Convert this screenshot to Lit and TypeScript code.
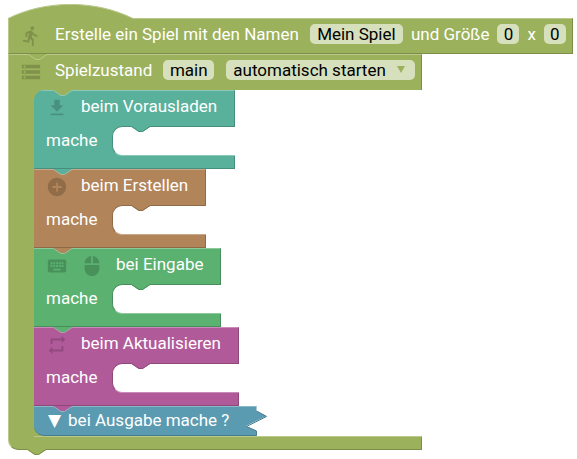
import { LitElement, html, svg, css } from "lit";
import { customElement, property } from "lit/decorators.js";

const ICONS: Record<string, string> = {
  run: "M13.49 5.48c1.1 0 2-.9 2-2s-.9-2-2-2-2 .9-2 2 .9 2 2 2zm-3.6 13.9l1-4.4 2.1 2v6h2v-7.5l-2.1-2 .6-3c1.3 1.5 3.3 2.5 5.5 2.5v-2c-1.9 0-3.5-1-4.3-2.4l-1-1.6c-.4-.6-1-1-1.7-1-.3 0-.5.1-.8.1l-5.2 2.2v4.7h2v-3.4l1.8-.7-1.6 8.1-4.9-1-.4 2 7 1.4z",
  storage: "M2 20h20v-4H2v4zm2-3h2v2H4v-2zM2 4v4h20V4H2zm4 3H4V5h2v2zm-4 7h20v-4H2v4zm2-3h2v2H4v-2z",
  download: "M19 9h-4V3H9v6H5l7 7 7-7zM5 18v2h14v-2H5z",
  add: "M12 2C6.48 2 2 6.48 2 12s4.48 10 10 10 10-4.48 10-10S17.52 2 12 2zm5 11h-4v4h-2v-4H7v-2h4V7h2v4h4v2z",
  keyboard: "M20 5H4c-1.1 0-1.99.9-1.99 2L2 17c0 1.1.9 2 2 2h16c1.1 0 2-.9 2-2V7c0-1.1-.9-2-2-2zm-9 3h2v2h-2V8zm0 3h2v2h-2v-2zM8 8h2v2H8V8zm0 3h2v2H8v-2zm-1 2H5v-2h2v2zm0-3H5V8h2v2zm9 7H8v-2h8v2zm0-4h-2v-2h2v2zm0-3h-2V8h2v2zm3 3h-2v-2h2v2zm0-3h-2V8h2v2z",
  mouse: "M13 1.07V9h7c0-4.08-3.05-7.44-7-7.93zM4 15c0 4.42 3.58 8 8 8s8-3.58 8-8v-4H4v4zm7-13.93C7.05 1.56 4 4.92 4 9h7V1.07z",
  repeat: "M7 7h10v3l4-4-4-4v3H5v6h2V7zm10 10H7v-3l-4 4 4 4v-3h12v-6h-2v4z",
};

const icon = (name: string) =>
  html`<svg class="icon" viewBox="0 0 24 24" aria-hidden="true"><path d=${ICONS[name]} /></svg>`;

/* Connector tab: the block above reaches into the one below. */
const tab = (kind: string) => html`
  <svg class="tab ${kind}" viewBox="0 0 20 7" aria-hidden="true">
    <path class="tab-fill" d="M0 0H20V1H19L11.5 6H7.75L0.5 1H0Z" />
    ${svg`<path class="tab-edge" d="M0 .5H.7L8 5.5H11.5L19 .5H20" />`}
  </svg>
`;

const blockStyles = css`
  * {
    box-sizing: border-box;
  }
  .row {
    position: relative;
    display: flex;
    align-items: center;
    gap: 13px;
    width: max-content;
    height: 36px;
    padding: 0 17px 5px 12px;
    background: var(--fill);
    border-top: 1px solid var(--light);
    border-right: 1px solid var(--dark);
    color: #fff;
    white-space: nowrap;
  }
  .icon {
    flex: none;
    width: 22px;
    height: 22px;
    margin-top: 3px;
    fill: rgb(0 0 0 / 0.18);
  }
  .tab {
    position: absolute;
    width: 20px;
    height: 7px;
    left: 19px;
    top: -1px;
  }
  .tab-fill {
    fill: var(--above);
  }
  .tab-edge {
    fill: none;
    stroke: var(--light);
  }
  .tab.out .tab-fill {
    fill: var(--fill);
  }
  .tab.out .tab-edge {
    stroke: var(--dark);
  }
`;

@customElement("event-block")
class EventBlock extends LitElement {
  @property() label = "";
  @property({ attribute: false }) icons: string[] = [];

  static styles = [
    blockStyles,
    css`
      :host {
        display: block;
        width: max-content;
      }
      .row {
        width: auto;
      }
      .statement {
        display: flex;
        height: 30px;
        background: var(--fill);
      }
      .keyword {
        padding: 0 15px 0 12px;
        line-height: 29px;
        color: #fff;
      }
      .mouth {
        position: relative;
        flex: 1;
        background: #fff;
        border-radius: 10px 0 0 10px;
        border-top: 1px solid var(--dark);
        border-left: 1px solid var(--dark);
        border-bottom: 1px solid var(--light);
      }
      .mouth .tab {
        left: 18px;
      }
      .foot {
        height: 13px;
        background: var(--fill);
        border-right: 1px solid var(--dark);
        border-bottom: 1px solid var(--dark);
      }
    `,
  ];

  render() {
    return html`
      <div class="row">${tab("in")} ${this.icons.map(icon)}<span>${this.label}</span></div>
      <div class="statement">
        <span class="keyword">mache</span>
        <div class="mouth">${tab("out")}</div>
      </div>
      <div class="foot"></div>
    `;
  }
}

@customElement("collapsed-block")
class CollapsedBlock extends LitElement {
  @property() label = "";

  static styles = [
    blockStyles,
    css`
      :host {
        display: flex;
        width: max-content;
      }
      .row {
        gap: 7px;
        height: 30px;
        margin: 0;
        padding: 0 17px 2px 14px;
        font: inherit;
        border-left: 0;
        border-right: 0;
        border-bottom: 1px solid var(--dark);
        border-radius: 0 0 0 10px;
        cursor: pointer;
      }
      .teeth {
        width: 21px;
        height: 30px;
      }
      .teeth-fill {
        fill: var(--fill);
      }
      .teeth-light,
      .teeth-dark {
        fill: none;
        stroke: var(--light);
      }
      .teeth-dark {
        stroke: var(--dark);
      }
    `,
  ];

  render() {
    return html`
      <button class="row" type="button">
        ${tab("in")}<span>▼</span><span>${this.label}</span>
      </button>
      <svg class="teeth" viewBox="0 0 21 30" aria-hidden="true">
        <path class="teeth-fill" d="M0 0H10.5V5L20.5 10L0 20L10.5 25V30H0Z" />
        <path class="teeth-light" d="M0 .5H10.5" />
        <path class="teeth-dark" d="M10.5 5L20.5 10.5L0.5 20.5L10.5 25V29.5H0" />
      </svg>
    `;
  }
}

interface EventDef {
  label: string;
  icons: string[];
  tone: string;
}

const EVENTS: EventDef[] = [
  { label: "beim Vorausladen", icons: ["download"], tone: "teal" },
  { label: "beim Erstellen", icons: ["add"], tone: "brown" },
  { label: "bei Eingabe", icons: ["keyboard", "mouse"], tone: "green" },
  { label: "beim Aktualisieren", icons: ["repeat"], tone: "purple" },
];

@customElement("app-root")
class AppRoot extends LitElement {
  static styles = [
    blockStyles,
    css`
      :host {
        display: block;
        min-height: 100vh;
        padding: 4px 4px 8px 8px;
        overflow-x: auto;
        box-sizing: border-box;
        background: #fff;
        font: 17px/22px Roboto, "DejaVu Sans", sans-serif;
      }
      .olive {
        --fill: #9cb15b;
        --light: #bac88c;
        --dark: #7d8e49;
      }
      .teal {
        --fill: #5ab19b;
        --light: #8bc8b9;
        --dark: #488e7c;
        --above: #9cb15b;
      }
      .brown {
        --fill: #b1845a;
        --light: #c8a98c;
        --dark: #8e6a48;
        --above: #5ab19b;
      }
      .green {
        --fill: #5ab170;
        --light: #8cc89b;
        --dark: #488e5a;
        --above: #b1845a;
      }
      .purple {
        --fill: #b15a99;
        --light: #c88cb8;
        --dark: #8e487a;
        --above: #5ab170;
      }
      .blue {
        --fill: #5a9bb1;
        --light: #8cb9c8;
        --dark: #487c8e;
        --above: #b15a99;
      }
      .hat {
        display: block;
        width: 125px;
        height: 15px;
        position: relative;
        z-index: 1;
        margin-bottom: -1px;
      }
      .hat-fill {
        fill: var(--fill);
      }
      .hat-edge {
        fill: none;
        stroke: var(--light);
      }
      .head {
        padding-right: 6px;
        gap: 8px;
        border-left: 1px solid var(--light);
        padding-left: 11px;
      }
      .head .icon {
        margin-right: 5px;
      }
      .title {
        margin-right: 3px;
      }
      .lower {
        width: max-content;
      }
      .name-row {
        padding-bottom: 4px;
        border-bottom: 1px solid var(--dark);
      }
      .lower .olive-tab .tab {
        --above: var(--fill);
      }
      .field {
        height: 20px;
        margin: 0;
        padding: 0;
        border: 0;
        border-radius: 5px;
        background: #d7e0bd;
        color: #000;
        font: inherit;
        line-height: 20px;
        text-align: center;
      }
      .name {
        width: 93px;
      }
      .state {
        width: 51px;
      }
      .size {
        width: 22px;
      }
      .choice {
        position: relative;
        display: flex;
        margin-left: 4px;
      }
      .mode {
        appearance: none;
        width: 189px;
        padding-left: 7px;
        text-align: left;
      }
      .arrow {
        position: absolute;
        right: 10px;
        top: 6px;
        width: 8px;
        height: 7px;
        fill: var(--fill);
        pointer-events: none;
      }
      .body {
        display: flex;
      }
      .spine {
        width: 26px;
        background: var(--fill);
        border-left: 1px solid var(--light);
      }
      .stack {
        display: flex;
        flex: 1;
        flex-direction: column;
        background: linear-gradient(var(--fill), var(--fill)) no-repeat 0 0 / 12px 100%;
        border-bottom: 1px solid var(--light);
      }
      .first {
        border-radius: 10px 0 0 0;
        overflow: hidden;
      }
      .base {
        position: relative;
        height: 13px;
        background: var(--fill);
        border: 1px solid var(--dark);
        border-top: 0;
        border-left-color: var(--light);
        border-radius: 0 0 0 10px;
      }
      .base .tab {
        left: 18px;
        top: 12px;
      }
    `,
  ];

  render() {
    return html`
      <main class="olive">
        <svg class="hat" viewBox="0 0 125 15" aria-hidden="true">
          <path class="hat-fill" d="M0 14.5C37.5 -4.3 87.5 -4.3 125 14.5V15H0Z" />
          <path class="hat-edge" d="M0 14.5C37.5 -4.3 87.5 -4.3 125 14.5" />
        </svg>
        <div class="row head name-row">
          ${icon("run")}
          <label class="title" for="name">Erstelle ein Spiel mit den Namen</label>
          <input id="name" class="field name" value="Mein Spiel" />
          <label for="width">und Größe</label>
          <input id="width" class="field size" value="0" />
          <label for="height">x</label>
          <input id="height" class="field size" value="0" />
        </div>
        <div class="lower">
          <div class="row head olive-tab">
            ${tab("in")} ${icon("storage")}
            <label class="title" for="state">Spielzustand</label>
            <input id="state" class="field state" value="main" />
            <span class="choice">
              <select class="field mode" aria-label="Startmodus">
                <option>automatisch starten</option>
              </select>
              <svg class="arrow" viewBox="0 0 8 7" aria-hidden="true"><path d="M0 0H8L4 7Z" /></svg>
            </span>
          </div>
          <div class="body">
            <div class="spine"></div>
            <div class="stack">
              ${EVENTS.map(
                (e, i) => html`<event-block
                  class="${e.tone} ${i === 0 ? "first" : ""}"
                  .label=${e.label}
                  .icons=${e.icons}
                ></event-block>`
              )}
              <collapsed-block class="blue" label="bei Ausgabe mache ?"></collapsed-block>
            </div>
          </div>
          <div class="base">${tab("out")}</div>
        </div>
      </main>
    `;
  }
}
